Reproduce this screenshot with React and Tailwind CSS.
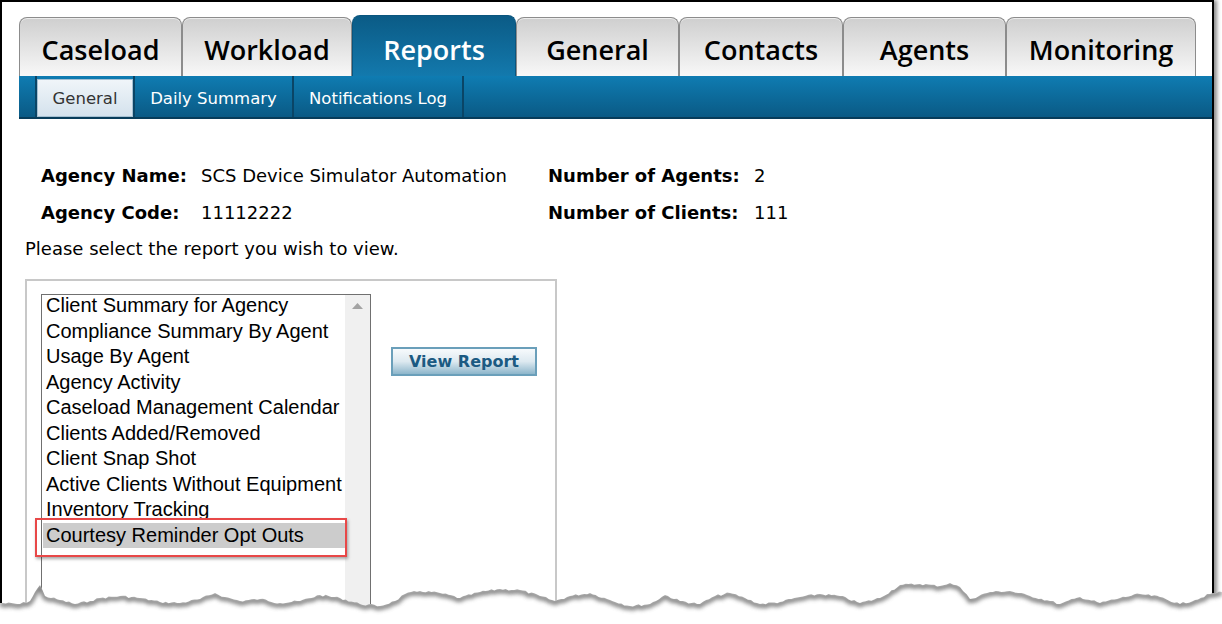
import React from "react";

const tabs = [
  { label: "Caseload", w: "w-[163px]" },
  { label: "Workload", w: "w-[170px]" },
  { label: "Reports", w: "w-[164px]", active: true },
  { label: "General", w: "w-[163px]" },
  { label: "Contacts", w: "w-[164px]" },
  { label: "Agents", w: "w-[163px]" },
  { label: "Monitoring", w: "w-[190px]" },
];

const reports = [
  "Client Summary for Agency",
  "Compliance Summary By Agent",
  "Usage By Agent",
  "Agency Activity",
  "Caseload Management Calendar",
  "Clients Added/Removed",
  "Client Snap Shot",
  "Active Clients Without Equipment",
  "Inventory Tracking",
  "Courtesy Reminder Opt Outs",
];

const edgePts = [
  [0, 603], [20, 604], [30, 601], [35, 592], [40, 585], [45, 596], [60, 600], [75, 604],
  [90, 601], [100, 598], [120, 596], [140, 598], [160, 602], [180, 603], [200, 599],
  [215, 593], [225, 597], [240, 601], [260, 599], [280, 603], [300, 601], [320, 595],
  [340, 598], [360, 604], [380, 606], [395, 601], [405, 594], [420, 591], [440, 593],
  [460, 598], [480, 592], [500, 589], [520, 590], [540, 596], [555, 601], [570, 596],
  [590, 593], [610, 600], [630, 606], [650, 604], [665, 595], [680, 601], [700, 604],
  [715, 596], [730, 593], [745, 598], [760, 604], [780, 602], [800, 597], [820, 594],
  [840, 596], [860, 603], [880, 598], [900, 585], [920, 584], [940, 586], [950, 583],
  [960, 587], [970, 599], [990, 592], [1010, 591], [1030, 596], [1050, 601], [1060, 604],
  [1080, 597], [1100, 603], [1120, 598], [1140, 594], [1160, 597], [1180, 604],
  [1195, 600], [1210, 594], [1222, 592],
];

function buildEdge() {
  let seed = 7;
  const rnd = () => {
    seed = (seed * 9301 + 49297) % 233280;
    return seed / 233280;
  };
  const pts = [];
  for (let i = 0; i < edgePts.length - 1; i++) {
    const [x1, y1] = edgePts[i];
    const [x2, y2] = edgePts[i + 1];
    const steps = Math.max(1, Math.round((x2 - x1) / 3));
    for (let s = 0; s < steps; s++) {
      const t = s / steps;
      const x = x1 + (x2 - x1) * t;
      const y = y1 + (y2 - y1) * t + (s === 0 ? 0 : (rnd() - 0.5) * 2.2);
      pts.push([x, y - 564]);
    }
  }
  const last = edgePts[edgePts.length - 1];
  pts.push([last[0], last[1] - 564]);
  return pts;
}

const edge = buildEdge();
const edgeLine = edge.map(([x, y], i) => `${i ? "L" : "M"}${x.toFixed(1)} ${y.toFixed(1)}`).join(" ");
const edgeFill = `${edgeLine} L1222 60 L0 60 Z`;

function TornEdge() {
  return (
    <svg className="absolute left-0 top-[564px]" width="1222" height="60" viewBox="0 0 1222 60">
      <defs>
        <clipPath id="below">
          <path d={edgeFill} />
        </clipPath>
        <filter id="blur" x="-5%" y="-50%" width="110%" height="200%">
          <feGaussianBlur stdDeviation="2" />
        </filter>
      </defs>
      <path d={edgeFill} fill="#ffffff" />
      <g clipPath="url(#below)">
        <path d={edgeLine} transform="translate(0 1.5)" fill="none" stroke="#555" strokeWidth="5" filter="url(#blur)" opacity="0.75" />
      </g>
    </svg>
  );
}

export default function App() {
  return (
    <div className="relative w-[1222px] h-[624px] bg-white overflow-hidden">
      <div className="w-[1214px] h-[620px] bg-white border-l-2 border-t-2 border-r-2 border-black shadow-[3px_0_4px_rgba(0,0,0,0.45)]">
        {/* Tabs */}
        <div className="pl-[17px] pt-[13px] flex items-end" style={{ fontFamily: '"Open Sans", sans-serif' }}>
          {tabs.map((t) =>
            t.active ? (
              <div
                key={t.label}
                className={`${t.w} h-[61px] rounded-t-[8px] bg-linear-to-b from-[#0b5b86] to-[#1379ad] border-x border-t border-[#0a557e] text-white text-[27px] font-semibold flex items-center justify-center pt-[9px]`}
              >
                {t.label}
              </div>
            ) : (
              <div
                key={t.label}
                className={`${t.w} h-[59px] rounded-t-[8px] bg-linear-to-b from-[#cfcfcf] to-[#f8f8f8] border border-b-0 border-[#8c8c8c] shadow-[inset_0_1px_0_#ececec] text-black text-[27px] font-semibold flex items-center justify-center pt-[7px]`}
              >
                {t.label}
              </div>
            )
          )}
        </div>
        {/* Sub bar */}
        <div className="ml-[17px] h-[43px] bg-linear-to-b from-[#0f7cb2] to-[#0a5a85] border-b-2 border-[#073c5a] flex items-stretch pl-[16px]" style={{ fontFamily: '"DejaVu Sans", Verdana, sans-serif' }}>
          <div className="w-[2px] bg-[#0a4566]" />
          <div className="w-[96px] mt-[3px] bg-linear-to-b from-[#f0f5f9] to-[#d4e2ed] border border-[#a5c0d2] text-[#333] text-[16.5px] flex items-center justify-center pt-[2px]">
            General
          </div>
          <div className="w-[2px] bg-[#0a4566]" />
          <div className="w-[157px] text-white text-[16.5px] flex items-center justify-center pt-[5px]">Daily Summary</div>
          <div className="w-[2px] bg-[#0a4566]" />
          <div className="w-[168px] text-white text-[16.5px] flex items-center justify-center pt-[5px]">Notifications Log</div>
          <div className="w-[2px] bg-[#0a4566]" />
        </div>
        {/* Content */}
        <div className="pl-[23px]" style={{ fontFamily: '"DejaVu Sans", Verdana, sans-serif' }}>
          <div className="ml-[16px] mt-[47px] grid grid-cols-[160px_347px_206px_auto] gap-y-[17px] text-[18px] leading-[20px] text-black">
            <div className="font-bold">Agency Name:</div>
            <div>SCS Device Simulator Automation</div>
            <div className="font-bold">Number of Agents:</div>
            <div>2</div>
            <div className="font-bold">Agency Code:</div>
            <div>11112222</div>
            <div className="font-bold">Number of Clients:</div>
            <div>111</div>
          </div>
          <div className="mt-[16px] text-[18px] leading-[20px] text-black">Please select the report you wish to view.</div>
          <div className="mt-[20px] w-[532px] h-[330px] border-2 border-b-0 border-[#c8c8c8] pl-[14px] pt-[13px] flex items-start">
            <div className="relative">
              <div className="w-[330px] h-[320px] border border-[#707070] flex bg-white overflow-hidden" style={{ fontFamily: '"Liberation Sans", Arial, sans-serif' }}>
                <div className="flex-1 pl-[1px] -mt-[2px] flex flex-col">
                  {reports.map((r, i) => (
                    <div
                      key={r}
                      className={`h-[25.5px] leading-[25.5px] pl-[3px] text-[20px] whitespace-nowrap text-black ${i === reports.length - 1 ? "bg-[#cccccc]" : ""}`}
                    >
                      {r}
                    </div>
                  ))}
                </div>
                <div className="w-[25px] bg-[#f0f0f0] flex justify-center pt-[8px]">
                  <svg width="11" height="6" viewBox="0 0 11 6">
                    <path d="M0 6 L5.5 0 L11 6 Z" fill="#a3a3a3" />
                  </svg>
                </div>
              </div>
              <div className="absolute left-[-6px] top-[224px] w-[312px] h-[39px] border-2 border-[#e84848] shadow-[1px_2px_3px_rgba(0,0,0,0.35)]" />
            </div>
            <button className="ml-[20px] mt-[53px] w-[146px] h-[29px] border-2 border-[#6a9fba] bg-linear-to-b from-[#f7fafc] via-[#dde9f0] to-[#8db6cb] text-[#1b5a82] font-bold text-[16px] leading-none flex items-center justify-center" style={{ fontFamily: '"DejaVu Sans", Verdana, sans-serif' }}>
              View Report
            </button>
          </div>
        </div>
      </div>
      <TornEdge />
    </div>
  );
}
